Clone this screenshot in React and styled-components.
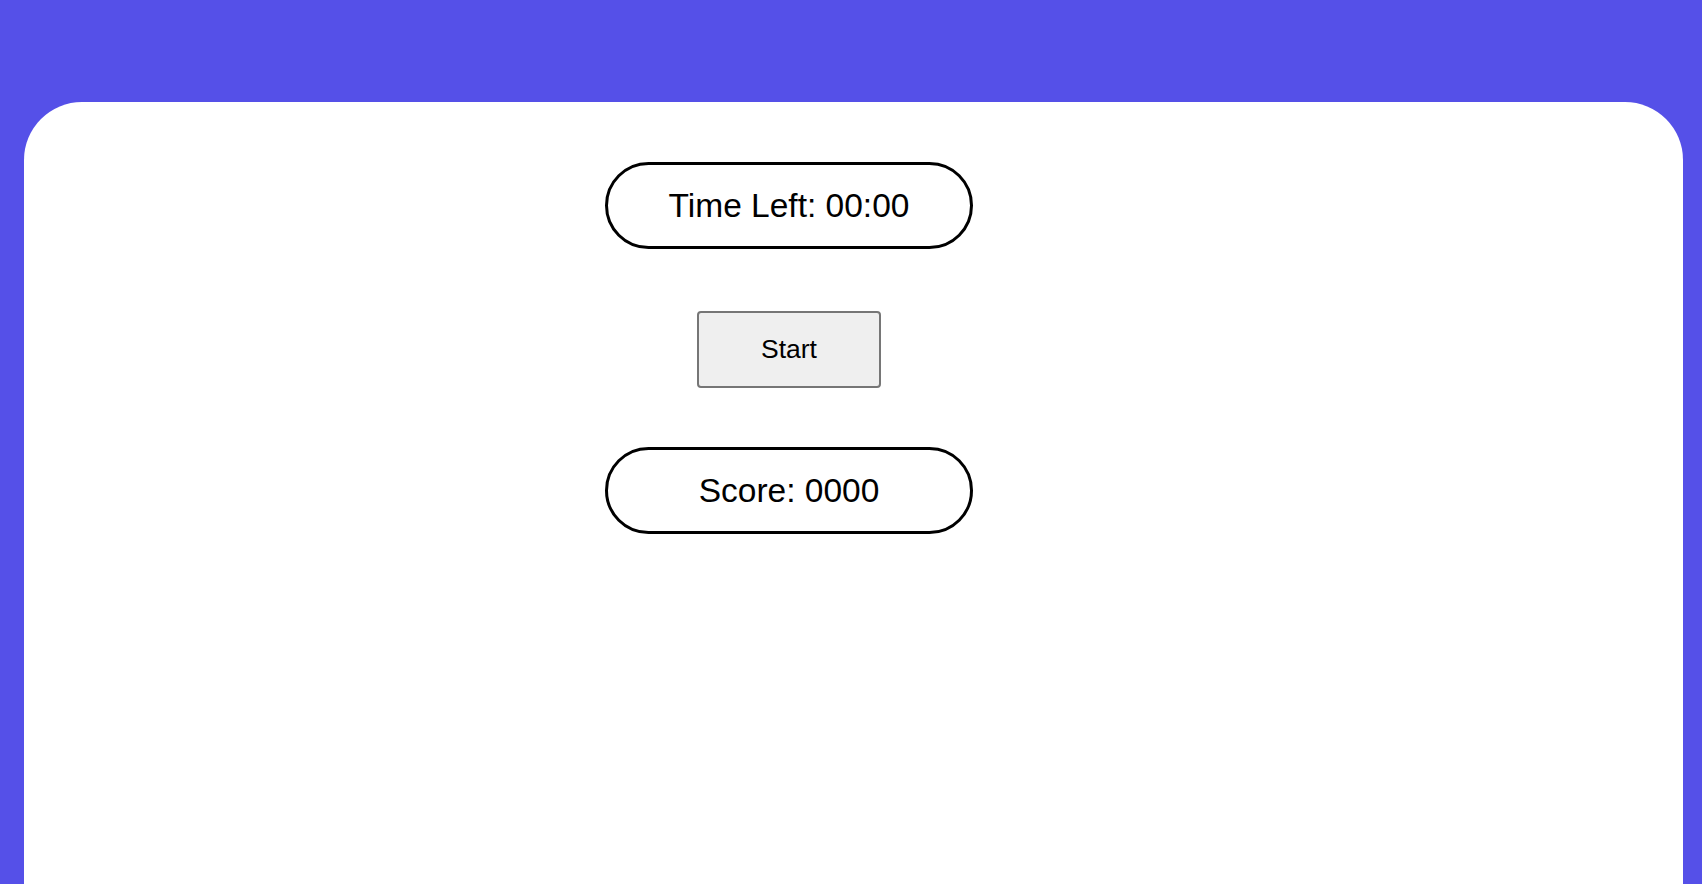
import React from "react";
import styled, { createGlobalStyle } from "styled-components";

const GlobalStyle = createGlobalStyle`
  html, body {
    margin: 0;
    padding: 0;
    height: 100%;
    background: #5550e8;
    font-family: "Liberation Sans", Arial, sans-serif;
    overflow: hidden;
  }
  #root {
    height: 100%;
  }
`;

const Page = styled.div`
  height: 100%;
  box-sizing: border-box;
  padding: 102px 19px 0 24px;
  display: flex;
`;

const Card = styled.main`
  flex: 1;
  background: #ffffff;
  border-radius: 58px 58px 0 0;
  padding-top: 60px;
  display: flex;
`;

const Column = styled.div`
  width: 1530px;
  display: flex;
  flex-direction: column;
  align-items: center;
`;

const Pill = styled.div`
  box-sizing: border-box;
  width: 368px;
  height: 87px;
  border: 3px solid #000000;
  border-radius: 44px;
  display: flex;
  align-items: center;
  justify-content: center;
  font-size: 33.5px;
  color: #000000;
  margin-top: ${(p) => p.$gap || 0}px;
`;

const StartButton = styled.button`
  box-sizing: border-box;
  width: 184px;
  height: 77px;
  margin-top: 62px;
  background: #efefef;
  border: 2px solid #767676;
  border-radius: 4px;
  font-family: "Liberation Sans", Arial, sans-serif;
  font-size: 26.5px;
  color: #000000;
  cursor: pointer;
`;

class App extends React.Component {
  constructor(props) {
    super(props);
    this.state = { time: "00:00", score: "0000" };
  }

  render() {
    return (
      <>
        <GlobalStyle />
        <Page>
          <Card>
            <Column>
              <Pill>Time Left: {this.state.time}</Pill>
              <StartButton>Start</StartButton>
              <Pill $gap={59}>Score: {this.state.score}</Pill>
            </Column>
          </Card>
        </Page>
      </>
    );
  }
}

export default App;
